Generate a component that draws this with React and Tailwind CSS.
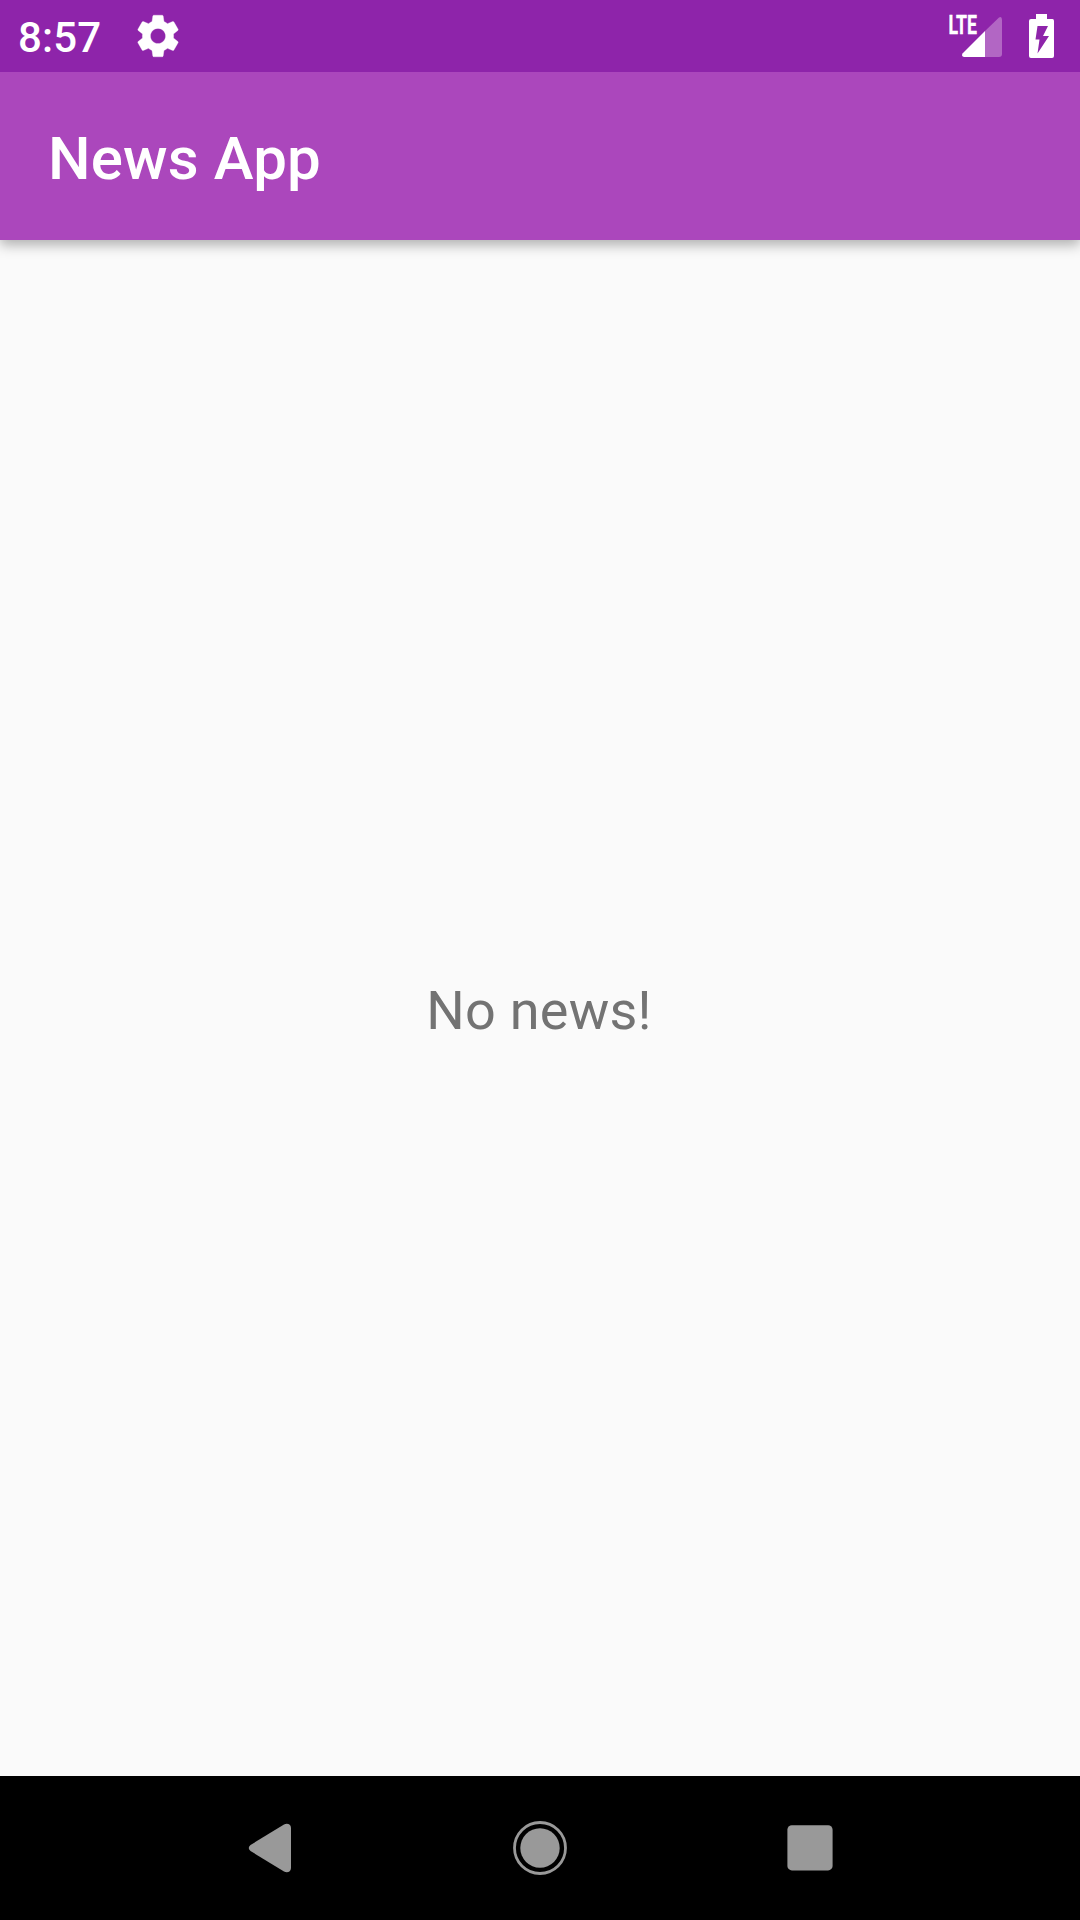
function StatusBar() {
  return (
    <div className="relative z-20 flex h-[72px] items-center justify-between bg-[#8e24aa] pl-[18px] pr-[25px] text-white">
      <div className="flex items-center">
        <span className="w-[114px] pt-[3px] text-[42px] leading-none font-medium tracking-[0.15px]">8:57</span>
        <svg width="52" height="52" viewBox="0 0 24 24" fill="currentColor" stroke="currentColor" strokeWidth="0.15">
          <path d="M19.14 12.94c.04-.3.06-.61.06-.94 0-.32-.02-.64-.07-.94l2.03-1.58c.18-.14.23-.41.12-.61l-1.92-3.32c-.12-.22-.37-.29-.59-.22l-2.39.96c-.5-.38-1.03-.7-1.62-.94l-.36-2.54c-.04-.24-.24-.41-.48-.41h-3.84c-.24 0-.43.17-.47.41l-.36 2.54c-.59.24-1.13.57-1.62.94l-2.39-.96c-.22-.08-.47 0-.59.22L2.74 8.87c-.12.21-.08.47.12.61l2.03 1.58c-.05.3-.09.63-.09.94s.02.64.07.94l-2.03 1.58c-.18.14-.23.41-.12.61l1.92 3.32c.12.22.37.29.59.22l2.39-.96c.5.38 1.03.7 1.62.94l.36 2.54c.05.24.24.41.48.41h3.84c.24 0 .44-.17.47-.41l.36-2.54c.59-.24 1.13-.56 1.62-.94l2.39.96c.22.08.47 0 .59-.22l1.92-3.32c.12-.22.07-.47-.12-.61l-2.01-1.58zM12 15.5c-1.93 0-3.5-1.57-3.5-3.5s1.57-3.5 3.5-3.5 3.5 1.57 3.5 3.5-1.57 3.5-3.5 3.5z" />
        </svg>
      </div>
      <div className="flex items-center gap-[25px]">
        <svg width="54" height="72" viewBox="0 0 54 72" fill="currentColor">
          <path d="M36 31V57H15Q12 56 13.500 53.500Z" />
          <path d="M36 31L50 17.500Q53 16 53 20V54Q53 57 50 57H36Z" fill="#b266c4" />
          <text x="-0.500" y="33.500" fontSize="25.500" fontWeight="700" stroke="currentColor" strokeWidth="0.4" textLength="28.500" lengthAdjust="spacingAndGlyphs">LTE</text>
        </svg>
        <svg width="27" height="72" viewBox="0 0 27 72">
          <path d="M8 14H19V19H24.500Q26 19 26 21V56Q26 58 24 58H3Q1 58 1 56V21Q1 19 3 19H8Z" fill="currentColor" />
          <path d="M9.500 26H20L15 36H21L9.500 53.500L11.500 39.500H7.500Z" fill="#8e24aa" />
        </svg>
      </div>
    </div>
  );
}

function NavigationBar() {
  return (
    <nav className="flex h-[144px] items-center justify-center gap-[216px] bg-black text-[#999999]">
      <svg width="54" height="54" viewBox="0 0 54 54" fill="currentColor">
        <path d="M7.500 24Q4 27 7.500 30L41 50.500C44 52 48 51 48 47V7C48 3 44 2 41 3.500Z" />
      </svg>
      <svg width="54" height="54" viewBox="0 0 54 54">
        <circle cx="27" cy="27" r="25.500" fill="none" stroke="currentColor" strokeWidth="2.800" />
        <circle cx="27" cy="27" r="19.700" fill="currentColor" />
      </svg>
      <svg width="54" height="54" viewBox="0 0 54 54" fill="currentColor">
        <rect x="4.400" y="4.200" width="45.200" height="45.200" rx="4.500" />
      </svg>
    </nav>
  );
}

export default function App() {
  return (
    <div className="flex h-[1920px] w-[1080px] flex-col overflow-hidden bg-[#fafafa] font-['Roboto',sans-serif]">
      <StatusBar />
      <header className="z-10 flex h-[168px] items-center bg-[#ab47bc] px-12 pt-[5px] shadow-[0_5px_12px_rgba(0,0,0,0.3)]">
        <h1 className="text-[60px] leading-none font-medium tracking-[0.15px] text-white">News App</h1>
      </header>
      <main className="flex flex-1 items-center justify-center pt-[5px] pr-[2px]">
        <p className="text-[54px] leading-[63px] tracking-[0.25px] text-[#737373]">No news!</p>
      </main>
      <NavigationBar />
    </div>
  );
}
